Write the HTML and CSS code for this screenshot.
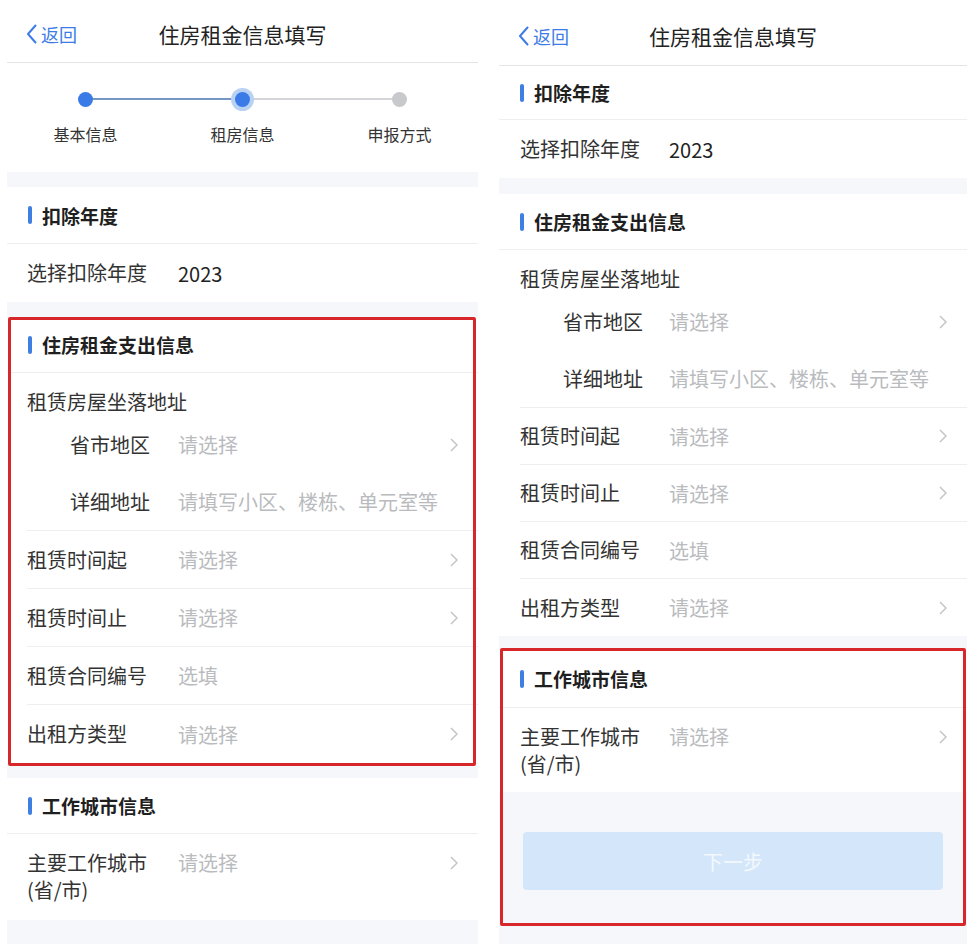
FILE: index.html
```html
<!DOCTYPE html>
<html lang="zh-CN">
<head>
<meta charset="utf-8">
<title>住房租金信息填写</title>
<link rel="stylesheet" href="styles.css">
</head>
<body>
<div class="screens">
  <!-- LEFT PHONE -->
  <div class="panel panel-left">
    <div class="header h-left">
      <div class="back">
        <svg class="back-icon" width="11" height="20" viewBox="0 0 11 20"><path d="M9.5 1.5 L2 10 L9.5 18.5" fill="none" stroke="#3d7ce6" stroke-width="2" stroke-linecap="round" stroke-linejoin="round"/></svg>
        <span>返回</span>
      </div>
      <div class="title">住房租金信息填写</div>
      <div></div>
    </div>
    <div class="steps">
      <div class="step s1 done"><span class="dot"></span><span class="step-label">基本信息</span></div>
      <div class="step s2 active"><span class="dot"></span><span class="step-label">租房信息</span></div>
      <div class="step s3"><span class="dot"></span><span class="step-label">申报方式</span></div>
    </div>
    <div class="band b15"></div>
    <div class="sec-head hl-56"><span class="bar"></span>扣除年度</div>
    <div class="row rl-58"><span class="label">选择扣除年度</span><span class="value">2023</span></div>
    <div class="band b15"></div>
    <div class="boxed box-left">
      <div class="sec-head hl-55"><span class="bar"></span>住房租金支出信息</div>
      <div class="addr">
        <div class="addr-title">租赁房屋坐落地址</div>
        <div class="sub-row"><span class="sub-label">省市地区</span><span class="ph">请选择</span><span class="chev"><svg width="8" height="14" viewBox="0 0 8 14"><path d="M1 1 L7 7 L1 13" fill="none" stroke="#c3c5c8" stroke-width="1.5"/></svg></span></div>
        <div class="sub-row"><span class="sub-label">详细地址</span><span class="ph">请填写小区、楼栋、单元室等</span></div>
      </div>
      <div class="row rl-57 inset"><span class="label">租赁时间起</span><span class="ph">请选择</span><span class="chev"><svg width="8" height="14" viewBox="0 0 8 14"><path d="M1 1 L7 7 L1 13" fill="none" stroke="#c3c5c8" stroke-width="1.5"/></svg></span></div>
      <div class="row rl-57 inset"><span class="label">租赁时间止</span><span class="ph">请选择</span><span class="chev"><svg width="8" height="14" viewBox="0 0 8 14"><path d="M1 1 L7 7 L1 13" fill="none" stroke="#c3c5c8" stroke-width="1.5"/></svg></span></div>
      <div class="row rl-57 inset"><span class="label">租赁合同编号</span><span class="ph">选填</span></div>
      <div class="row rl-57 last"><span class="label">出租方类型</span><span class="ph">请选择</span><span class="chev"><svg width="8" height="14" viewBox="0 0 8 14"><path d="M1 1 L7 7 L1 13" fill="none" stroke="#c3c5c8" stroke-width="1.5"/></svg></span></div>
    </div>
    <div class="band b15"></div>
    <div class="sec-head hl-55"><span class="bar"></span>工作城市信息</div>
    <div class="row two-line tl-left"><span class="label">主要工作城市<br>(省/市)</span><span class="ph">请选择</span><span class="chev"><svg width="8" height="14" viewBox="0 0 8 14"><path d="M1 1 L7 7 L1 13" fill="none" stroke="#c3c5c8" stroke-width="1.5"/></svg></span></div>
    <div class="band fill"></div>
  </div>

  <!-- RIGHT PHONE -->
  <div class="panel panel-right">
    <div class="header h-right">
      <div class="back">
        <svg class="back-icon" width="11" height="20" viewBox="0 0 11 20"><path d="M9.5 1.5 L2 10 L9.5 18.5" fill="none" stroke="#3d7ce6" stroke-width="2" stroke-linecap="round" stroke-linejoin="round"/></svg>
        <span>返回</span>
      </div>
      <div class="title">住房租金信息填写</div>
      <div></div>
    </div>
    <div class="sec-head hr-54"><span class="bar"></span>扣除年度</div>
    <div class="row rr-57"><span class="label">选择扣除年度</span><span class="value">2023</span></div>
    <div class="band b16"></div>
    <div class="sec-head hl-55"><span class="bar"></span>住房租金支出信息</div>
    <div class="addr">
      <div class="addr-title">租赁房屋坐落地址</div>
      <div class="sub-row"><span class="sub-label">省市地区</span><span class="ph">请选择</span><span class="chev"><svg width="8" height="14" viewBox="0 0 8 14"><path d="M1 1 L7 7 L1 13" fill="none" stroke="#c3c5c8" stroke-width="1.5"/></svg></span></div>
      <div class="sub-row"><span class="sub-label">详细地址</span><span class="ph">请填写小区、楼栋、单元室等</span></div>
    </div>
    <div class="row rr-56 inset"><span class="label">租赁时间起</span><span class="ph">请选择</span><span class="chev"><svg width="8" height="14" viewBox="0 0 8 14"><path d="M1 1 L7 7 L1 13" fill="none" stroke="#c3c5c8" stroke-width="1.5"/></svg></span></div>
    <div class="row rr-56 inset"><span class="label">租赁时间止</span><span class="ph">请选择</span><span class="chev"><svg width="8" height="14" viewBox="0 0 8 14"><path d="M1 1 L7 7 L1 13" fill="none" stroke="#c3c5c8" stroke-width="1.5"/></svg></span></div>
    <div class="row rr-56 inset"><span class="label">租赁合同编号</span><span class="ph">选填</span></div>
    <div class="row rr-56 last"><span class="label">出租方类型</span><span class="ph">请选择</span><span class="chev"><svg width="8" height="14" viewBox="0 0 8 14"><path d="M1 1 L7 7 L1 13" fill="none" stroke="#c3c5c8" stroke-width="1.5"/></svg></span></div>
    <div class="band b14"></div>
    <div class="boxed box-right">
      <div class="sec-head hr-57"><span class="bar"></span>工作城市信息</div>
      <div class="row two-line tl-right"><span class="label">主要工作城市<br>(省/市)</span><span class="ph">请选择</span><span class="chev"><svg width="8" height="14" viewBox="0 0 8 14"><path d="M1 1 L7 7 L1 13" fill="none" stroke="#c3c5c8" stroke-width="1.5"/></svg></span></div>
      <div class="actions"><div class="btn">下一步</div></div>
    </div>
    <div class="band fill"></div>
  </div>
</div>
</body>
</html>
```
FILE: styles.css
```css
* { box-sizing: border-box; }
html, body { margin: 0; padding: 0; background: #ffffff; }
body {
  font-family: "Noto Sans CJK SC", "Noto Sans", sans-serif;
  color: #333333;
  width: 975px;
  height: 944px;
  overflow: hidden;
}
.screens {
  display: flex;
  gap: 21px;
  padding-left: 7px;
  height: 944px;
}
.panel {
  display: flex;
  flex-direction: column;
  background: #ffffff;
  height: 944px;
}
.panel-left { width: 471px; }
.panel-right { width: 468px; }

/* header */
.header {
  display: grid;
  grid-template-columns: 1fr auto 1fr;
  align-items: center;
  border-bottom: 1px solid #e2e4e7;
  flex: 0 0 auto;
}
.h-left { height: 63px; padding-top: 5px; }
.h-right { height: 66px; padding-top: 6px; }
.back {
  display: flex;
  align-items: center;
  gap: 4px;
  padding-left: 19px;
  color: #3d7ce6;
  font-size: 18px;
  line-height: 24px;
}
.back-icon { display: block; }
.title {
  font-size: 21px;
  line-height: 28px;
  color: #222222;
}

/* steps */
.steps {
  display: grid;
  grid-template-columns: repeat(3, 1fr);
  height: 109px;
  flex: 0 0 auto;
}
.step {
  position: relative;
  display: flex;
  flex-direction: column;
  align-items: center;
  padding-top: 29px;
}
.step::before, .step::after {
  content: "";
  position: absolute;
  top: 35px;
  height: 2px;
  width: 50%;
}
.step::before { left: 0; }
.step::after { right: 0; }
.s1::after { background: #7597c4; }
.s2::before { background: #7597c4; }
.s2::after { background: #d3d5d8; }
.s3::before { background: #d3d5d8; }
.dot {
  position: relative;
  z-index: 1;
  width: 15px;
  height: 15px;
  border-radius: 50%;
  background: #c7c9cc;
}
.done .dot { background: #3b7be8; }
.active .dot { background: #3b7be8; box-shadow: 0 0 0 4px #b9d2f4; }
.step-label {
  margin-top: 16px;
  font-size: 16px;
  line-height: 22px;
  color: #333333;
}

/* bands */
.band { background: #f5f7fa; flex: 0 0 auto; }
.b14 { height: 14px; }
.b15 { height: 15px; }
.b16 { height: 16px; }
.fill { flex: 1 1 auto; }

/* section heads */
.sec-head {
  display: flex;
  align-items: center;
  gap: 10px;
  padding-left: 21px;
  font-size: 19px;
  font-weight: 700;
  color: #1f1f1f;
  border-bottom: 1px solid #eceef0;
  flex: 0 0 auto;
}
.hl-56 { height: 57px; }
.hl-55 { height: 56px; }
.hr-54 { height: 54px; }
.hr-57 { height: 58px; }
.bar {
  width: 4px;
  height: 18px;
  border-radius: 2px;
  background: #3f7fe3;
}

/* rows */
.row {
  display: flex;
  align-items: center;
  margin-left: 20px;
  padding-right: 20px;
  font-size: 20px;
  flex: 0 0 auto;
}
.rl-58 { height: 58px; margin-left: 0; padding-left: 20px; }
.rr-57 { height: 58px; margin-left: 0; padding-left: 21px; }
.rl-57 { height: 58px; }
.rr-56 { height: 57px; margin-left: 21px; }
.inset { border-bottom: 1px solid #eceef0; }
.last { border-bottom: none; }
.label {
  flex: 0 0 151px;
  color: #333333;
  line-height: 28px;
}
.rr-57 .label, .rr-56 .label { flex-basis: 149px; }
.value { color: #222222; }
.ph { color: #b9bbbe; flex: 1 1 auto; white-space: nowrap; }
.chev { display: flex; align-items: center; margin-left: auto; }
.chev svg { display: block; }

.two-line {
  align-items: flex-start;
  margin-left: 0;
  padding-left: 20px;
  padding-top: 15px;
}
.two-line .label { line-height: 27px; }
.two-line .ph { line-height: 27px; }
.two-line .chev { height: 27px; }
.tl-left { height: 86px; }
.tl-right { height: 84px; padding-left: 21px; }
.tl-right .label { flex-basis: 149px; }

/* address group */
.addr {
  display: flex;
  flex-direction: column;
  margin-left: 20px;
  border-bottom: 1px solid #eceef0;
  flex: 0 0 auto;
}
.panel-right .addr { margin-left: 21px; }
.addr-title {
  padding-top: 15px;
  height: 43px;
  font-size: 20px;
  line-height: 28px;
  color: #333333;
}
.sub-row {
  display: flex;
  align-items: center;
  height: 57px;
  padding-left: 43px;
  padding-right: 20px;
  font-size: 20px;
}
.sub-label { flex: 0 0 108px; line-height: 28px; }
.panel-right .sub-label { flex-basis: 106px; }

/* red highlight boxes */
.boxed { position: relative; display: flex; flex-direction: column; flex: 0 0 auto; }
.boxed::after {
  content: "";
  position: absolute;
  border: 3px solid #d8272b;
  border-radius: 2px;
  pointer-events: none;
}
.box-left::after { top: 0; bottom: -3px; left: 1px; right: 2px; }
.box-right::after { top: -2px; bottom: 0; left: 1px; right: 1px; }

/* actions */
.actions {
  background: #f5f7fa;
  padding: 40px 24px 36px;
}
.btn {
  height: 58px;
  border-radius: 4px;
  background: #d4e6f9;
  color: #f3f8fe;
  font-size: 20px;
  display: flex;
  align-items: center;
  justify-content: center;
}
```
